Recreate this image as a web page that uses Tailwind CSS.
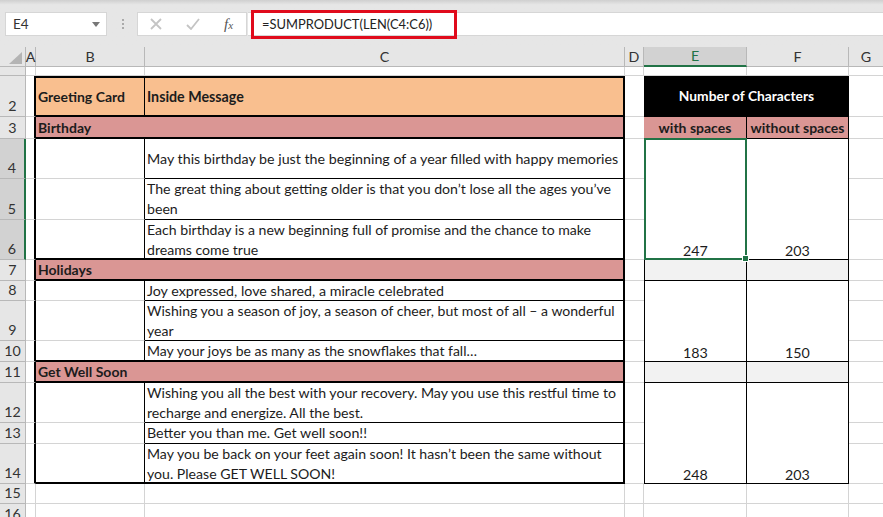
<!DOCTYPE html>
<html lang="en">
<head>
  <meta charset="UTF-8">
  <title>Excel - Number of Characters</title>
  <script src="https://cdn.jsdelivr.net/npm/@tailwindcss/browser@4"></script>
</head>
<body class="w-[883px] h-[517px] overflow-hidden bg-white font-['Lato',sans-serif] text-[14.25px] text-[#1c1c1c]">

  <!-- Formula bar -->
  <div class="h-[47px] bg-[#e6e6e6] bg-gradient-to-b from-[#cfcfcf] via-[#e6e6e6] via-[10%] to-[#e6e6e6] flex items-start pt-[12px] pl-[5px]">
    <div class="w-[102px] h-[24px] bg-white border border-[#d6d6d6] flex items-center justify-between pl-[7px] pr-[6px] text-[13.5px] text-[#333]">
      <span>E4</span>
      <svg width="8" height="5" viewBox="0 0 8 5"><path d="M0 0h8L4 5z" fill="#777"/></svg>
    </div>
    <div class="w-[4px] ml-[15px] mt-[7px] flex flex-col gap-[2px]">
      <span class="w-[2px] h-[2px] bg-[#aaa]"></span>
      <span class="w-[2px] h-[2px] bg-[#aaa]"></span>
      <span class="w-[2px] h-[2px] bg-[#aaa]"></span>
    </div>
    <div class="w-[110px] h-[24px] ml-[11px] bg-white border border-[#d6d6d6] flex items-center">
      <svg class="ml-[12px]" width="12" height="12" viewBox="0 0 12 12"><path d="M1 1l10 10M11 1L1 11" stroke="#c4c4c4" stroke-width="1.8"/></svg>
      <svg class="ml-[24px]" width="14" height="12" viewBox="0 0 14 12"><path d="M1 7l4 4 8-10" stroke="#c4c4c4" stroke-width="1.8" fill="none"/></svg>
      <span class="ml-[24px] font-['Liberation_Serif',serif] italic text-[15px] text-[#555]">f<span class="text-[11px]">x</span></span>
    </div>
    <div class="flex-1 h-[24px] bg-white ml-[1px] relative border-y border-[#d6d6d6]">
      <div class="absolute left-[3px] top-[-3px] w-[206px] h-[29px] border-[3px] border-[#e00b1c] flex items-center pl-[8px] text-[12.9px] text-[#222]">=SUMPRODUCT(LEN(C4:C6))</div>
    </div>
  </div>

  <!-- Sheet -->
  <div class="grid grid-cols-[26px_10px_109px_480px_19px_103px_102px_34px] grid-rows-[20px_9px_41px_22px_40px_41px_40px_21px_20px_40px_21px_21px_40px_21px_40px_20px_20px]">

    <!-- Column headers -->
    <div class="bg-[#e6e6e6] border-r border-b border-[#b8b8b8] flex items-end justify-end pr-[3px] pb-[2px]">
      <svg width="13" height="12" viewBox="0 0 13 12"><path d="M13 0v12H0z" fill="#b4b4b4"/></svg>
    </div>
    <div class="bg-[#e6e6e6] border-r border-b border-[#b8b8b8] flex items-center justify-center text-[#333]">A</div>
    <div class="bg-[#e6e6e6] border-r border-b border-[#b8b8b8] flex items-center justify-center text-[#333]">B</div>
    <div class="bg-[#e6e6e6] border-r border-b border-[#b8b8b8] flex items-center justify-center text-[#333]">C</div>
    <div class="bg-[#e6e6e6] border-r border-b border-[#b8b8b8] flex items-center justify-center text-[#333]">D</div>
    <div class="bg-[#d2d2d2] border-r border-b-2 border-b-[#217346] border-r-[#b8b8b8] flex items-center justify-center text-[#217346]">E</div>
    <div class="bg-[#e6e6e6] border-r border-b border-[#b8b8b8] flex items-center justify-center text-[#333]">F</div>
    <div class="bg-[#e6e6e6] border-b border-[#b8b8b8] flex items-center justify-center text-[#333]">G</div>

    <!-- Row 1 -->
    <div class="bg-[#e6e6e6] border-r border-b border-[#b8b8b8]"></div>
    <div class="border-r border-b border-[#d4d4d4]"></div>
    <div class="border-r border-b border-[#d4d4d4]"></div>
    <div class="border-r border-b border-[#d4d4d4]"></div>
    <div class="border-r border-b border-[#d4d4d4]"></div>
    <div class="border-r border-b border-[#d4d4d4]"></div>
    <div class="border-r border-b border-[#d4d4d4]"></div>
    <div class="border-b border-[#d4d4d4]"></div>

    <!-- Row 2 -->
    <div class="bg-[#e6e6e6] border-r border-b border-[#b8b8b8] flex items-end justify-center text-[#333]">2</div>
    <div class="border-r-2 border-r-black border-b border-[#d4d4d4]"></div>
    <div class="bg-[#f9bf8f] border-y-2 border-black border-r flex items-center pl-[2px] font-bold text-[14px]">Greeting Card</div>
    <div class="bg-[#f9bf8f] border-y-2 border-r-2 border-black flex items-center pl-[2px] font-bold">Inside Message</div>
    <div class="border-b border-[#d4d4d4]"></div>
    <div class="col-span-2 bg-black text-white font-bold text-[13.8px] flex items-center justify-center">Number of Characters</div>
    <div class="border-b border-[#d4d4d4]"></div>

    <!-- Row 3 -->
    <div class="bg-[#e6e6e6] border-r border-b border-[#b8b8b8] flex items-end justify-center text-[#333]">3</div>
    <div class="border-r-2 border-r-black border-b border-[#d4d4d4]"></div>
    <div class="col-span-2 bg-[#da9694] border-b-2 border-r-2 border-black flex items-center pl-[2px] font-bold text-[14px]">Birthday</div>
    <div class="border-b border-[#d4d4d4]"></div>
    <div class="bg-[#da9694] border-r border-b border-black flex items-center justify-center font-bold text-[14px]">with spaces</div>
    <div class="bg-[#da9694] border-r border-b border-black flex items-center justify-center font-bold text-[14px]">without spaces</div>
    <div class="border-b border-[#d4d4d4]"></div>

    <!-- Row 4 -->
    <div class="bg-[#d2d2d2] border-r-2 border-r-[#217346] border-b border-b-[#b8b8b8] flex items-end justify-center text-[#333]">4</div>
    <div class="border-r-2 border-r-black border-b border-[#d4d4d4]"></div>
    <div class="border-r border-r-black border-b border-b-[#d4d4d4]"></div>
    <div class="border-r-2 border-r-black border-b border-b-black flex items-center pl-[2px]">May this birthday be just the beginning of a year filled with happy memories</div>
    <div class="border-b border-[#d4d4d4]"></div>
    <div class="row-span-3 relative border-x border-b border-black flex items-end justify-center leading-[16px]">
      247
      <div class="absolute inset-[-1px] border-2 border-[#217346]">
        <span class="absolute right-[-4px] bottom-[-4px] w-[7px] h-[7px] bg-[#217346] border border-white"></span>
      </div>
    </div>
    <div class="row-span-3 border-r border-b border-black flex items-end justify-center leading-[16px]">203</div>
    <div class="border-b border-[#d4d4d4]"></div>

    <!-- Row 5 -->
    <div class="bg-[#d2d2d2] border-r-2 border-r-[#217346] border-b border-b-[#b8b8b8] flex items-end justify-center text-[#333]">5</div>
    <div class="border-r-2 border-r-black border-b border-[#d4d4d4]"></div>
    <div class="border-r border-r-black border-b border-b-[#d4d4d4]"></div>
    <div class="border-r-2 border-r-black border-b border-b-black pl-[2px] leading-[20px] text-[14.15px]">The great thing about getting older is that you don’t lose all the ages you’ve<br>been</div>
    <div class="border-b border-[#d4d4d4]"></div>
    <div class="border-b border-[#d4d4d4]"></div>

    <!-- Row 6 -->
    <div class="bg-[#d2d2d2] border-r-2 border-r-[#217346] border-b border-b-[#b8b8b8] flex items-end justify-center text-[#333]">6</div>
    <div class="border-r-2 border-r-black border-b border-[#d4d4d4]"></div>
    <div class="border-r border-r-black border-b-2 border-b-black"></div>
    <div class="border-r-2 border-r-black border-b-2 border-b-black pl-[2px] leading-[20px] text-[14.1px]">Each birthday is a new beginning full of promise and the chance to make<br>dreams come true</div>
    <div class="border-b border-[#d4d4d4]"></div>
    <div class="border-b border-[#d4d4d4]"></div>

    <!-- Row 7 -->
    <div class="bg-[#e6e6e6] border-r border-b border-[#b8b8b8] flex items-end justify-center text-[#333]">7</div>
    <div class="border-r-2 border-r-black border-b border-[#d4d4d4]"></div>
    <div class="col-span-2 bg-[#da9694] border-b-2 border-r-2 border-black flex items-center pl-[2px] font-bold text-[14px]">Holidays</div>
    <div class="border-b border-[#d4d4d4]"></div>
    <div class="bg-[#f2f2f2] border-x border-b border-black"></div>
    <div class="bg-[#f2f2f2] border-r border-b border-black"></div>
    <div class="border-b border-[#d4d4d4]"></div>

    <!-- Row 8 -->
    <div class="bg-[#e6e6e6] border-r border-b border-[#b8b8b8] flex items-end justify-center text-[#333]">8</div>
    <div class="border-r-2 border-r-black border-b border-[#d4d4d4]"></div>
    <div class="border-r border-r-black border-b border-b-[#d4d4d4]"></div>
    <div class="border-r-2 border-r-black border-b border-b-black flex items-center pl-[2px]">Joy expressed, love shared, a miracle celebrated</div>
    <div class="border-b border-[#d4d4d4]"></div>
    <div class="row-span-3 border-x border-b border-black flex items-end justify-center leading-[16px]">183</div>
    <div class="row-span-3 border-r border-b border-black flex items-end justify-center leading-[16px]">150</div>
    <div class="border-b border-[#d4d4d4]"></div>

    <!-- Row 9 -->
    <div class="bg-[#e6e6e6] border-r border-b border-[#b8b8b8] flex items-end justify-center text-[#333]">9</div>
    <div class="border-r-2 border-r-black border-b border-[#d4d4d4]"></div>
    <div class="border-r border-r-black border-b border-b-[#d4d4d4]"></div>
    <div class="border-r-2 border-r-black border-b border-b-black pl-[2px] leading-[20px] text-[14.05px]">Wishing you a season of joy, a season of cheer, but most of all – a wonderful<br>year</div>
    <div class="border-b border-[#d4d4d4]"></div>
    <div class="border-b border-[#d4d4d4]"></div>

    <!-- Row 10 -->
    <div class="bg-[#e6e6e6] border-r border-b border-[#b8b8b8] flex items-end justify-center text-[#333]">10</div>
    <div class="border-r-2 border-r-black border-b border-[#d4d4d4]"></div>
    <div class="border-r border-r-black border-b-2 border-b-black"></div>
    <div class="border-r-2 border-r-black border-b-2 border-b-black flex items-center pl-[2px] text-[14px]">May your joys be as many as the snowflakes that fall…</div>
    <div class="border-b border-[#d4d4d4]"></div>
    <div class="border-b border-[#d4d4d4]"></div>

    <!-- Row 11 -->
    <div class="bg-[#e6e6e6] border-r border-b border-[#b8b8b8] flex items-end justify-center text-[#333]">11</div>
    <div class="border-r-2 border-r-black border-b border-[#d4d4d4]"></div>
    <div class="col-span-2 bg-[#da9694] border-b-2 border-r-2 border-black flex items-center pl-[2px] font-bold text-[14px]">Get Well Soon</div>
    <div class="border-b border-[#d4d4d4]"></div>
    <div class="bg-[#f2f2f2] border-x border-b border-black"></div>
    <div class="bg-[#f2f2f2] border-r border-b border-black"></div>
    <div class="border-b border-[#d4d4d4]"></div>

    <!-- Row 12 -->
    <div class="bg-[#e6e6e6] border-r border-b border-[#b8b8b8] flex items-end justify-center text-[#333]">12</div>
    <div class="border-r-2 border-r-black border-b border-[#d4d4d4]"></div>
    <div class="border-r border-r-black border-b border-b-[#d4d4d4]"></div>
    <div class="border-r-2 border-r-black border-b border-b-black pl-[2px] leading-[20px] text-[14.13px]">Wishing you all the best with your recovery. May you use this restful time to<br>recharge and energize. All the best.</div>
    <div class="border-b border-[#d4d4d4]"></div>
    <div class="row-span-3 border-x border-b border-black flex items-end justify-center leading-[16px]">248</div>
    <div class="row-span-3 border-r border-b border-black flex items-end justify-center leading-[16px]">203</div>
    <div class="border-b border-[#d4d4d4]"></div>

    <!-- Row 13 -->
    <div class="bg-[#e6e6e6] border-r border-b border-[#b8b8b8] flex items-end justify-center text-[#333]">13</div>
    <div class="border-r-2 border-r-black border-b border-[#d4d4d4]"></div>
    <div class="border-r border-r-black border-b border-b-[#d4d4d4]"></div>
    <div class="border-r-2 border-r-black border-b border-b-black flex items-center pl-[2px]">Better you than me. Get well soon!!</div>
    <div class="border-b border-[#d4d4d4]"></div>
    <div class="border-b border-[#d4d4d4]"></div>

    <!-- Row 14 -->
    <div class="bg-[#e6e6e6] border-r border-b border-[#b8b8b8] flex items-end justify-center text-[#333]">14</div>
    <div class="border-r-2 border-r-black border-b border-[#d4d4d4]"></div>
    <div class="border-r border-r-black border-b-2 border-b-black"></div>
    <div class="border-r-2 border-r-black border-b-2 border-b-black pl-[2px] leading-[20px] text-[14.1px]">May you be back on your feet again soon! It hasn’t been the same without<br>you. Please GET WELL SOON!</div>
    <div class="border-b border-[#d4d4d4]"></div>
    <div class="border-b border-[#d4d4d4]"></div>

    <!-- Row 15 -->
    <div class="bg-[#e6e6e6] border-r border-b border-[#b8b8b8] flex items-end justify-center text-[#333]">15</div>
    <div class="border-r border-b border-[#d4d4d4]"></div>
    <div class="border-r border-b border-[#d4d4d4]"></div>
    <div class="border-r border-b border-[#d4d4d4]"></div>
    <div class="border-r border-b border-[#d4d4d4]"></div>
    <div class="border-r border-b border-[#d4d4d4]"></div>
    <div class="border-r border-b border-[#d4d4d4]"></div>
    <div class="border-b border-[#d4d4d4]"></div>

    <!-- Row 16 -->
    <div class="bg-[#e6e6e6] border-r border-[#b8b8b8] flex items-end justify-center text-[#333]">16</div>
    <div class="border-r border-[#d4d4d4]"></div>
    <div class="border-r border-[#d4d4d4]"></div>
    <div class="border-r border-[#d4d4d4]"></div>
    <div class="border-r border-[#d4d4d4]"></div>
    <div class="border-r border-[#d4d4d4]"></div>
    <div class="border-r border-[#d4d4d4]"></div>
    <div></div>
  </div>
</body>
</html>
